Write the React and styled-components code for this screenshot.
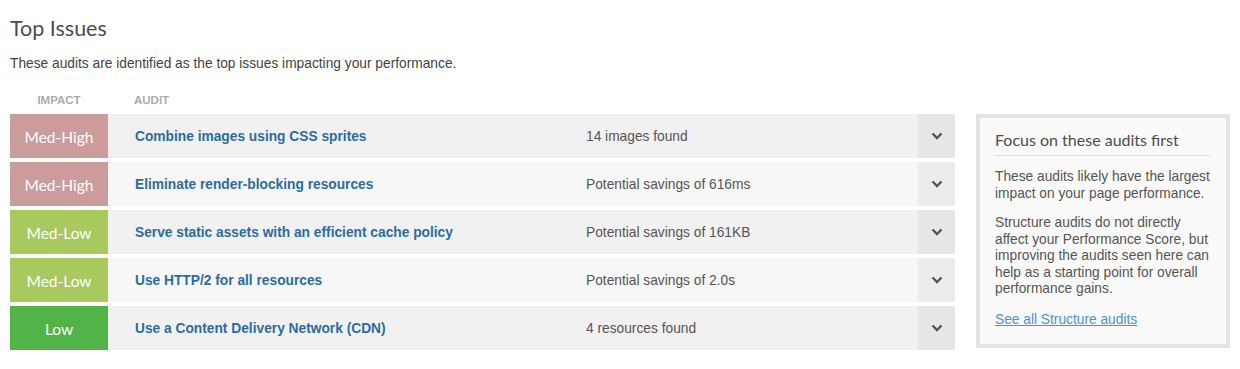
import React from 'react';
import styled, { createGlobalStyle } from 'styled-components';

const GlobalStyle = createGlobalStyle`
  body {
    margin: 0;
    background: #ffffff;
    font-family: 'Liberation Sans', Arial, sans-serif;
  }
`;

const Page = styled.div`
  padding: 13px 10px 0 10px;
  width: 1220px;
`;

const Title = styled.h2`
  margin: 0;
  font-family: Lato, 'Open Sans', sans-serif;
  font-weight: 400;
  font-size: 21.5px;
  line-height: 30px;
  color: #4d4d4d;
`;

const Intro = styled.p`
  margin: 12px 0 0 0;
  font-size: 13.75px;
  line-height: 18px;
  color: #444;
`;

const Body = styled.div`
  display: flex;
  align-items: flex-start;
  gap: 21px;
  margin-top: 17px;
`;

const Table = styled.div`
  width: 945px;
  display: flex;
  flex-direction: column;
  gap: 4px;
`;

const HeadRow = styled.div`
  display: flex;
  height: 20px;
  align-items: center;
  font-size: 11.5px;
  font-weight: bold;
  color: #aaa;
  text-transform: uppercase;
`;

const HeadImpact = styled.div`
  width: 98px;
  text-align: center;
`;

const HeadAudit = styled.div`
  padding-left: 26px;
`;

const Row = styled.div`
  display: flex;
  height: 44px;
  background: ${(p) => (p.$alt ? '#f7f7f7' : '#f1f1f1')};
`;

const impactColors = {
  'Med-High': '#cc9b9b',
  'Med-Low': '#a9c85f',
  Low: '#52b448',
};

const Impact = styled.div`
  width: 98px;
  display: flex;
  align-items: center;
  justify-content: center;
  padding-top: 1px;
  box-sizing: border-box;
  background: ${(p) => impactColors[p.$level]};
  color: #fff;
  font-family: Lato, 'Open Sans', sans-serif;
  font-weight: 400;
  font-size: 15.5px;
`;

const AuditName = styled.div`
  box-sizing: border-box;
  width: 452px;
  padding-left: 27px;
  display: flex;
  align-items: center;
  font-size: 13.75px;
  font-weight: bold;
  color: #2b6ca3;
`;

const Detail = styled.div`
  flex: 1;
  display: flex;
  align-items: center;
  padding-left: 26px;
  font-size: 13.75px;
  color: #555;
`;

const Toggle = styled.div`
  width: 37px;
  display: flex;
  align-items: center;
  justify-content: center;
  background: ${(p) => (p.$alt ? '#ececec' : '#e7e7e7')};
`;

const Side = styled.aside`
  width: 254px;
  box-sizing: border-box;
  margin-top: 24px;
  border: 4px solid #e3e3e3;
  background: #fafafa;
  padding: 11px 15px 16px 15px;
  color: #555;
`;

const SideTitle = styled.h3`
  margin: 0;
  font-family: Lato, 'Open Sans', sans-serif;
  font-weight: 400;
  font-size: 16px;
  line-height: 22px;
  color: #4d4d4d;
  padding-bottom: 4px;
  border-bottom: 1px solid #dedede;
`;

const SideText = styled.p`
  margin: 13px 0 0 0;
  font-size: 13.75px;
  line-height: 16.5px;
`;

const SideLink = styled.a`
  display: inline-block;
  margin-top: 14px;
  font-size: 13.75px;
  color: #4a92db;
  text-decoration: underline;
`;

const Chevron = () => (
  <svg width="12" height="8" viewBox="0 0 12 8">
    <path d="M1.5 1.5 L6 6 L10.5 1.5" fill="none" stroke="#555" strokeWidth="2.4" />
  </svg>
);

const issues = [
  { level: 'Med-High', name: 'Combine images using CSS sprites', detail: '14 images found' },
  { level: 'Med-High', name: 'Eliminate render-blocking resources', detail: 'Potential savings of 616ms' },
  { level: 'Med-Low', name: 'Serve static assets with an efficient cache policy', detail: 'Potential savings of 161KB' },
  { level: 'Med-Low', name: 'Use HTTP/2 for all resources', detail: 'Potential savings of 2.0s' },
  { level: 'Low', name: 'Use a Content Delivery Network (CDN)', detail: '4 resources found' },
];

const App = () => (
  <>
    <GlobalStyle />
    <Page>
      <Title>Top Issues</Title>
      <Intro>These audits are identified as the top issues impacting your performance.</Intro>
      <Body>
        <Table>
          <HeadRow>
            <HeadImpact>Impact</HeadImpact>
            <HeadAudit>Audit</HeadAudit>
          </HeadRow>
          {issues.map((issue, i) => (
            <Row key={issue.name} $alt={i % 2 === 1}>
              <Impact $level={issue.level}>{issue.level}</Impact>
              <AuditName>{issue.name}</AuditName>
              <Detail>{issue.detail}</Detail>
              <Toggle $alt={i % 2 === 1}>
                <Chevron />
              </Toggle>
            </Row>
          ))}
        </Table>
        <Side>
          <SideTitle>Focus on these audits first</SideTitle>
          <SideText>These audits likely have the largest impact on your page performance.</SideText>
          <SideText>
            Structure audits do not directly affect your Performance Score, but improving the audits seen here can help as a starting point for overall performance gains.
          </SideText>
          <SideLink href="#">See all Structure audits</SideLink>
        </Side>
      </Body>
    </Page>
  </>
);

export default App;
